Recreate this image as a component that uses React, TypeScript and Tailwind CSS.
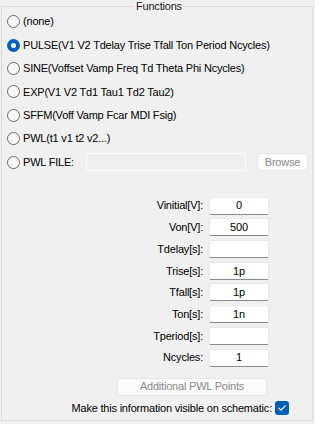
import React from "react";

const font = { fontFamily: '"Liberation Sans", Arial, sans-serif' };

function Radio({ checked }: { checked?: boolean }) {
  if (checked) {
    return (
      <span className="w-[13px] h-[13px] rounded-full bg-[#005fb8] flex items-center justify-center shrink-0">
        <span className="w-[5px] h-[5px] rounded-full bg-white" />
      </span>
    );
  }
  return <span className="w-[13px] h-[13px] rounded-full border border-[#6b6b6b] bg-[#f7f7f7] shrink-0" />;
}

const functions = [
  { label: "(none)" },
  { label: "PULSE(V1 V2 Tdelay Trise Tfall Ton Period Ncycles)", checked: true },
  { label: "SINE(Voffset Vamp Freq Td Theta Phi Ncycles)" },
  { label: "EXP(V1 V2 Td1 Tau1 Td2 Tau2)" },
  { label: "SFFM(Voff Vamp Fcar MDI Fsig)" },
  { label: "PWL(t1 v1 t2 v2...)" },
];

const params = [
  { label: "Vinitial[V]:", value: "0" },
  { label: "Von[V]:", value: "500" },
  { label: "Tdelay[s]:", value: "" },
  { label: "Trise[s]:", value: "1p" },
  { label: "Tfall[s]:", value: "1p" },
  { label: "Ton[s]:", value: "1n" },
  { label: "Tperiod[s]:", value: "" },
  { label: "Ncycles:", value: "1" },
];

export default function App() {
  return (
    <div className="w-[315px] h-[424px] bg-[#f0f0f0] pt-[6px] pl-[1px] text-[11px] tracking-[-0.2px] text-[#000]" style={font}>
      <div className="relative w-[312px] h-[415px] border border-[#dcdcdc] flex flex-col">
        <span className="absolute top-[-8px] left-[132px] px-[2px] bg-[#f0f0f0] leading-[14px] text-[#1a1a1a]">Functions</span>

        <div className="flex flex-col pt-[3px] pl-[5px]">
          {functions.map((f) => (
            <div key={f.label} className="h-[23.4px] flex items-center gap-[3px]">
              <Radio checked={f.checked} />
              <span>{f.label}</span>
            </div>
          ))}
          <div className="h-[23.4px] flex items-center">
            <Radio />
            <span className="ml-[3px] w-[63px]">PWL FILE:</span>
            <div className="w-[160px] h-[18px] border border-[#fbfbfb] bg-[#efefef]" />
            <div className="ml-[11px] w-[51px] h-[18px] rounded-[3px] border border-[#e6e6e6] bg-[#fbfbfb] text-[#8a8a8a] flex items-center justify-center">
              Browse
            </div>
          </div>
        </div>

        <div className="flex flex-col gap-[3.7px] mt-[23px]">
          {params.map((p) => (
            <div key={p.label} className="flex items-center">
              <span className="w-[201px] text-right">{p.label}</span>
              <div className="ml-[6px] w-[60px] h-[18px] bg-white border border-[#e8e8e8] border-b-[#8a8a8a] rounded-[2px] flex items-center justify-center">
                {p.value}
              </div>
            </div>
          ))}
        </div>

        <div className="mt-[11px] ml-[115px] w-[150px] h-[18px] rounded-[3px] border border-[#e6e6e6] bg-[#fbfbfb] text-[#8a8a8a] flex items-center justify-center">
          Additional PWL Points
        </div>

        <div className="mt-[4px] flex items-center justify-end pr-[23px] gap-[3px]">
          <span>Make this information visible on schematic:</span>
          <span className="w-[14px] h-[14px] rounded-[3px] bg-[#005fb8] flex items-center justify-center">
            <svg width="10" height="10" viewBox="0 0 10 10" fill="none">
              <path d="M2 5.2 L4.1 7.2 L8.2 2.8" stroke="white" strokeWidth="1.2" strokeLinecap="round" strokeLinejoin="round" />
            </svg>
          </span>
        </div>
      </div>
    </div>
  );
}
